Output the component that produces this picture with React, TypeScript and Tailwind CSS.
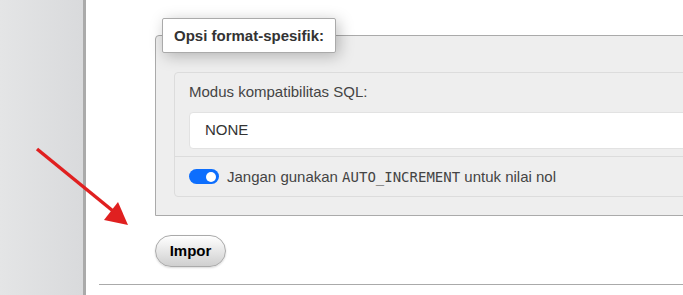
import React from "react";

export default function App() {
  return (
    <div className="relative flex h-[295px] w-[683px] overflow-hidden bg-white font-['Liberation_Sans',Arial,sans-serif] text-[#444]">
      {/* left nav strip */}
      <div className="w-[83px] shrink-0 bg-gradient-to-r from-[#e4e5e6] to-[#d9dadc]" />
      <div className="w-[3px] shrink-0 bg-[#aaaaaa]" />

      <div className="flex min-w-0 flex-1 flex-col">
        <div className="pl-[69px] pt-[35px]">
          <div className="relative w-[620px] rounded-tl-[4px] border border-[#aaa] bg-[#eee] px-[18px] pb-[18px] pt-[36px]">
            <div className="absolute left-[6px] top-[-18px] rounded-[2px] border border-[#aaa] bg-white px-[11px] py-[6px] text-[15px] font-bold leading-[21px] text-[#333] shadow-[3px_3px_15px_rgba(0,0,0,0.25)]">
              Opsi format-spesifik:
            </div>

            <div className="rounded-[4px] border border-[#dcdcdc] bg-[#eee]">
              <div className="px-[14px] pb-[7px] pt-[8px]">
                <div className="mb-[10px] text-[15px] leading-[21px]">Modus kompatibilitas SQL:</div>
                <div className="flex h-[37px] items-center rounded-[4px] border border-[#e2e2e2] bg-white pl-[15px] text-[15px] text-[#333]">
                  NONE
                </div>
              </div>
              <div className="flex h-[40px] items-center gap-[8px] border-t border-[#dcdcdc] px-[14px]">
                <span className="relative inline-flex h-[15px] w-[30px] items-center rounded-full bg-[#0d6efd]">
                  <span className="absolute right-[3px] h-[10px] w-[10px] rounded-full bg-white" />
                </span>
                <span className="text-[15px] leading-[20px]">
                  Jangan gunakan{" "}
                  <code className="font-['DejaVu_Sans_Mono',monospace] text-[14px] text-[#444]">AUTO_INCREMENT</code>{" "}
                  untuk nilai nol
                </span>
              </div>
            </div>
          </div>

          <button className="mt-[19px] h-[32px] w-[71px] rounded-full border border-[#aaa] bg-gradient-to-b from-[#fff] to-[#cfcfcf] text-[15px] font-bold text-black shadow-[0_1px_2px_rgba(0,0,0,0.15)]">
            Impor
          </button>
        </div>

        <div className="ml-[13px] mt-[17px] h-px bg-[#aaa]" />
      </div>

      {/* annotation arrow */}
      <svg className="pointer-events-none absolute left-0 top-0" width="683" height="295">
        <line x1="37" y1="149" x2="113" y2="211" stroke="#e02020" strokeWidth="3.5" />
        <polygon points="128,225 104,220 118,202" fill="#e02020" />
      </svg>
    </div>
  );
}
